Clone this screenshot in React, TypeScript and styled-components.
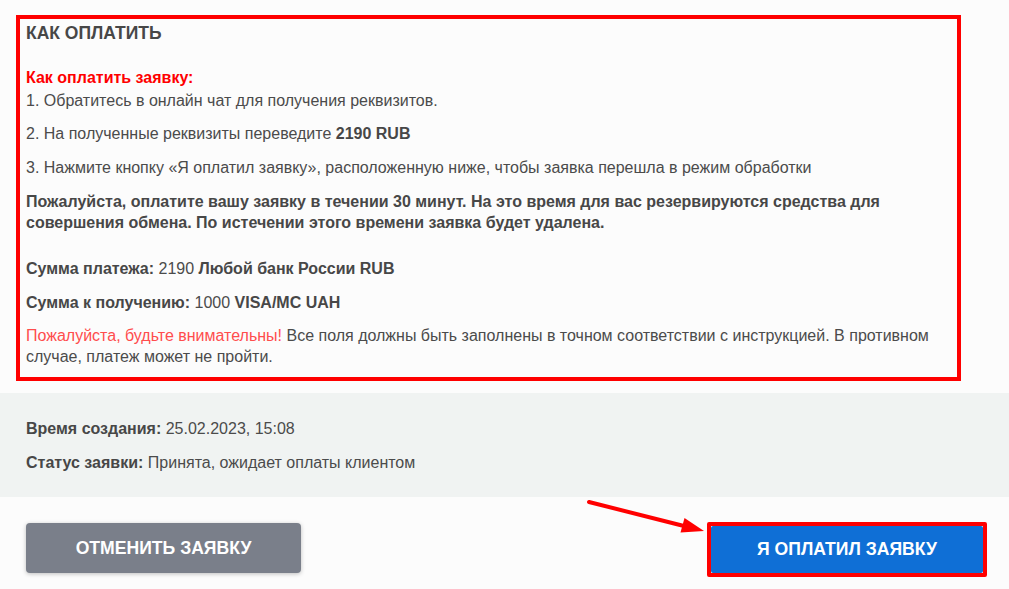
import React from "react";
import styled, { createGlobalStyle } from "styled-components";

const GlobalStyle = createGlobalStyle`
  html, body {
    margin: 0;
    padding: 0;
    background: #fcfcfc;
  }
  body {
    font-family: "Liberation Sans", Arial, sans-serif;
    color: #4b4b4b;
  }
`;

const Page = styled.div`
  width: 1009px;
  height: 589px;
  overflow: hidden;
  background: #fcfcfc;
  display: flex;
  flex-direction: column;
`;

const TopArea = styled.div`
  padding: 15px 48px 0 16px;
`;

const HighlightBox = styled.section`
  border: 4px solid #ff0000;
  padding: 3px 8px 10px 6px;
  font-size: 16px;
  line-height: 21px;
`;

const Heading = styled.h3`
  margin: 0 0 23px;
  font-size: 17.5px;
  line-height: 22px;
  font-weight: 700;
  color: #474747;
`;

const RedTitle = styled.div`
  color: #ff0000;
  font-weight: 700;
  margin-bottom: 2px;
`;

const Para = styled.p<{ $gap?: number }>`
  margin: ${(p) => p.$gap ?? 12}px 0 0;
`;

const FirstPara = styled.p`
  margin: 0;
`;

const Strong = styled.b`
  font-weight: 700;
  color: #474747;
`;

const Warn = styled.span`
  color: #ff4d4d;
`;

const InfoBand = styled.section`
  margin-top: 12px;
  background: #f0f3f2;
  padding: 25px 26px 24px;
  font-size: 16px;
  line-height: 21px;
  display: flex;
  flex-direction: column;
  gap: 13px;
`;

const InfoRow = styled.div``;

const Actions = styled.div`
  position: relative;
  display: flex;
  justify-content: space-between;
  align-items: flex-start;
  padding: 26px 22px 0 26px;
`;

const ButtonBase = styled.button`
  height: 50px;
  width: 275px;
  border: none;
  border-radius: 4px;
  color: #ffffff;
  font-family: "Liberation Sans", Arial, sans-serif;
  font-weight: 700;
  font-size: 17.6px;
  text-transform: uppercase;
  cursor: pointer;
  box-shadow: 0 1px 4px rgba(0, 0, 0, 0.25);
`;

const CancelButton = styled(ButtonBase)`
  background: #7a7f8a;
`;

const PaidFrame = styled.div`
  margin-top: -1px;
  border: 4px solid #ff0000;
  border-radius: 2px;
  display: flex;
`;

const PaidButton = styled(ButtonBase)`
  width: 272px;
  height: 47px;
  border-radius: 2px;
  background: #0f6fd6;
  box-shadow: none;
`;

const ArrowOverlay = styled.svg`
  position: absolute;
  left: 585px;
  top: 0;
  overflow: visible;
`;

export default function App() {
  return (
    <>
      <GlobalStyle />
      <Page>
        <TopArea>
          <HighlightBox>
            <Heading>КАК ОПЛАТИТЬ</Heading>
            <RedTitle>Как оплатить заявку:</RedTitle>
            <FirstPara>1. Обратитесь в онлайн чат для получения реквизитов.</FirstPara>
            <Para>
              2. На полученные реквизиты переведите <Strong>2190 RUB</Strong>
            </Para>
            <Para $gap={13}>
              3. Нажмите кнопку «Я оплатил заявку», расположенную ниже, чтобы заявка перешла в режим обработки
            </Para>
            <Para $gap={13}>
              <Strong>
                Пожалуйста, оплатите вашу заявку в течении 30 минут. На это время для вас резервируются средства для
                совершения обмена. По истечении этого времени заявка будет удалена.
              </Strong>
            </Para>
            <Para $gap={25}>
              <Strong>Сумма платежа:</Strong> 2190 <Strong>Любой банк России RUB</Strong>
            </Para>
            <Para $gap={13}>
              <Strong>Сумма к получению:</Strong> 1000 <Strong>VISA/MC UAH</Strong>
            </Para>
            <Para>
              <Warn>Пожалуйста, будьте внимательны!</Warn> Все поля должны быть заполнены в точном соответствии с
              инструкцией. В противном случае, платеж может не пройти.
            </Para>
          </HighlightBox>
        </TopArea>
        <InfoBand>
          <InfoRow>
            <Strong>Время создания:</Strong> 25.02.2023, 15:08
          </InfoRow>
          <InfoRow>
            <Strong>Статус заявки:</Strong> Принята, ожидает оплаты клиентом
          </InfoRow>
        </InfoBand>
        <Actions>
          <CancelButton>Отменить заявку</CancelButton>
          <PaidFrame>
            <PaidButton>Я оплатил заявку</PaidButton>
          </PaidFrame>
          <ArrowOverlay width="125" height="40" viewBox="0 0 125 40">
            <line x1="4" y1="5" x2="97" y2="28.5" stroke="#ff0000" strokeWidth="4" strokeLinecap="round" />
            <polygon points="119,34 95.5,35.5 99.5,21" fill="#ff0000" />
          </ArrowOverlay>
        </Actions>
      </Page>
    </>
  );
}
